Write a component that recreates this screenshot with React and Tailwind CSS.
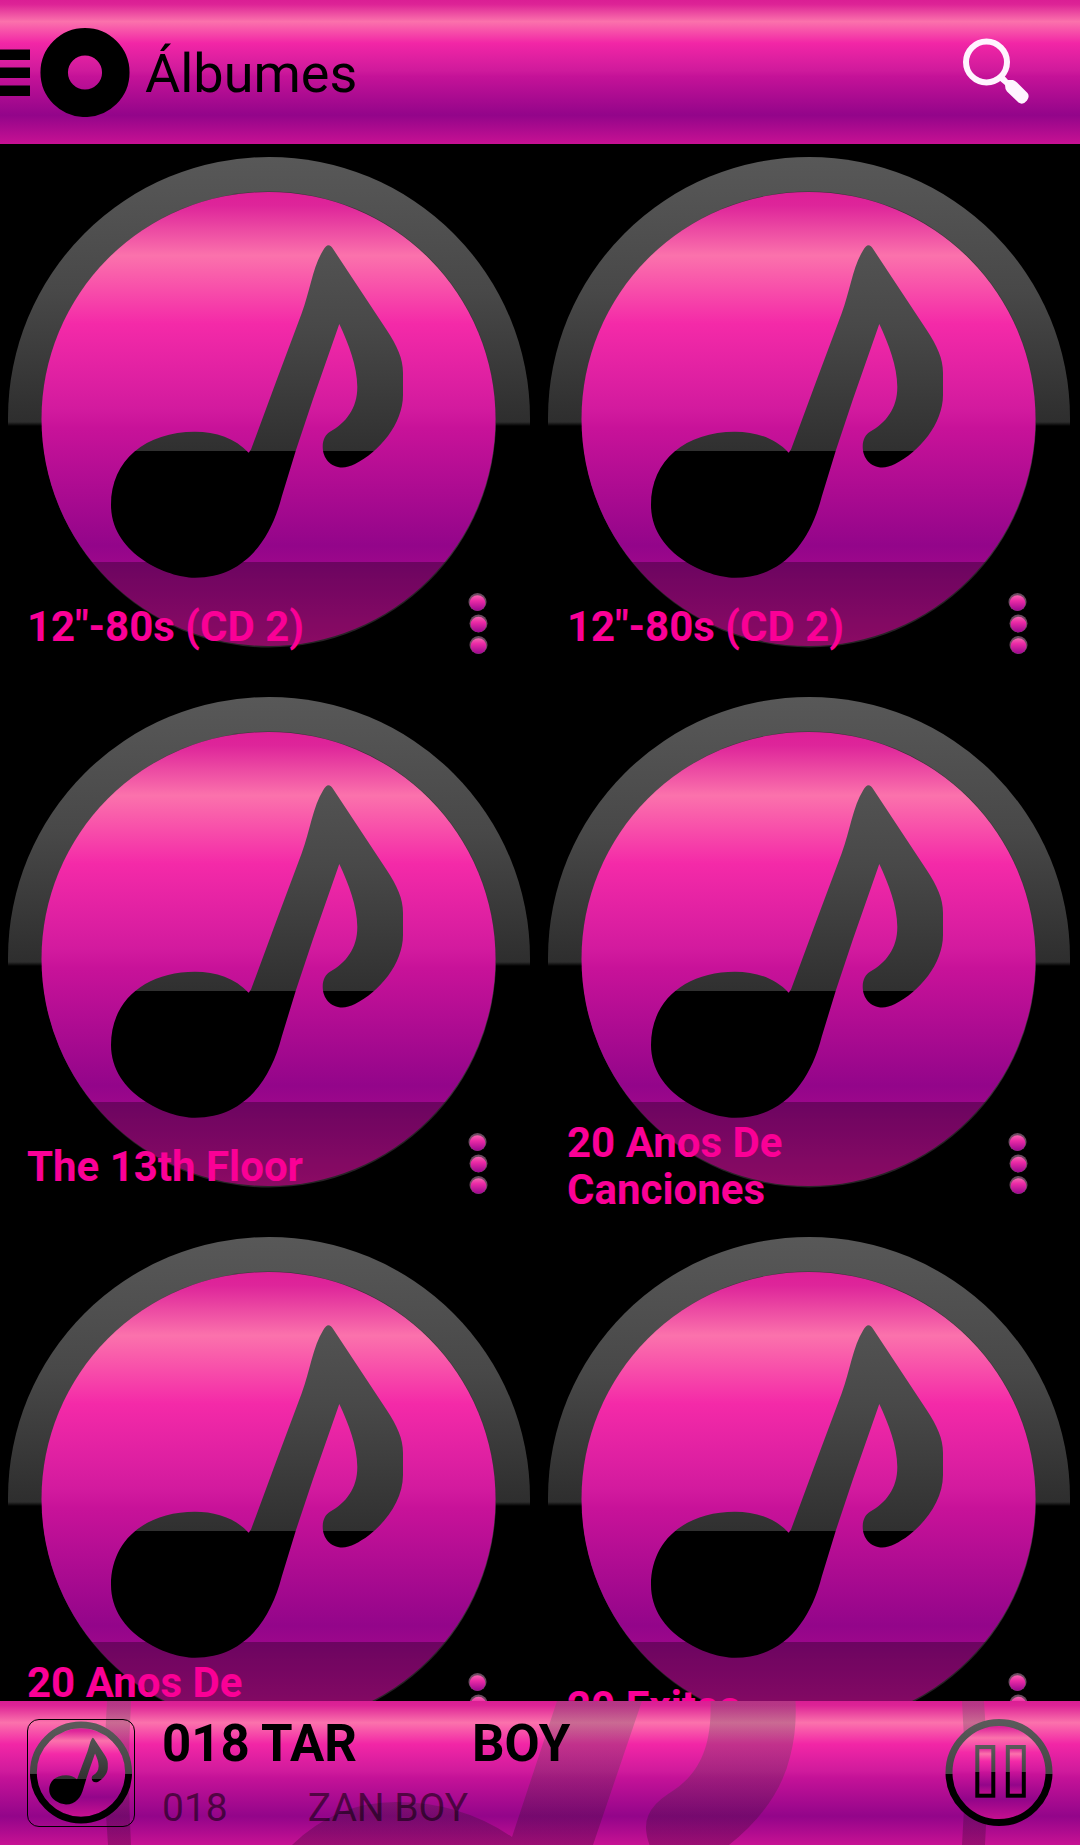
const albums = [
  { id: 1, title: '12"-80s (CD 2)' },
  { id: 2, title: '12"-80s (CD 2)' },
  { id: 3, title: "The 13th Floor" },
  { id: 4, title: "20 Anos De Canciones" },
  { id: 5, title: "20 Anos De Canciones" },
  { id: 6, title: "20 Exitos" },
];

const barStyle =
  "bg-[linear-gradient(to_bottom,#da1e94_0%,#dd2396_3%,#fb72ac_15%,#f226a6_30%,#cf1a9c_49%,#c51298_53%,#93058a_80%,#c71193_100%)]";

const NOTE =
  "M323.3 106 Q328.3 97 333.3 105.3 L386.7 186 C397 202 403 214 403 229 V251 C403 280 379 308 355 320 C337 329.5 322.7 318 322.7 302.7 C322.7 295 326 290 330 287.7 C346 279 357.5 264 357.3 242.7 C357 222 349 201 339.3 180 L312.7 256 L296 306 L281.7 352.7 C270 398 243 433.7 195 433.7 C168 434 111 410 111 361 C111 316 146 287.7 195 287.7 C216 287.7 235 294 248.7 308.7 L251 305.5 L276.7 236 L301.7 169.3 C310 147 313 122 323.3 106 Z";

// gradients used by every drawing on the page
const Gradients = () => (
  <svg className="absolute h-0 w-0" aria-hidden="true">
    <defs>
      <linearGradient id="pink" x1="0" y1="0" x2="0" y2="1">
        <stop offset="0" stopColor="#dd1f97" />
        <stop offset=".03" stopColor="#de259a" />
        <stop offset=".14" stopColor="#fb72ac" />
        <stop offset=".29" stopColor="#f42aa8" />
        <stop offset=".48" stopColor="#d21a9e" />
        <stop offset=".52" stopColor="#c81299" />
        <stop offset=".78" stopColor="#93058a" />
        <stop offset="1" stopColor="#c81090" />
      </linearGradient>
      <linearGradient id="rim" gradientUnits="userSpaceOnUse" x1="0" y1="13" x2="0" y2="282">
        <stop offset="0" stopColor="#585858" />
        <stop offset=".5" stopColor="#484848" />
        <stop offset=".985" stopColor="#2e2e2e" />
        <stop offset="1" stopColor="#000" />
      </linearGradient>
      <linearGradient id="note" gradientUnits="userSpaceOnUse" x1="0" y1="60" x2="0" y2="307">
        <stop offset="0" stopColor="#585858" />
        <stop offset=".5" stopColor="#484848" />
        <stop offset=".998" stopColor="#303030" />
        <stop offset="1" stopColor="#000" />
      </linearGradient>
      <linearGradient id="ring" x1="0" y1="0" x2="0" y2="1">
        <stop offset="0" stopColor="#5a5a5a" />
        <stop offset=".51" stopColor="#444" />
        <stop offset=".52" stopColor="#000" />
        <stop offset="1" stopColor="#000" />
      </linearGradient>
      <linearGradient id="dot" x1="0" y1="0" x2="0" y2="1">
        <stop offset="0" stopColor="#f567b0" />
        <stop offset=".35" stopColor="#ec2ba6" />
        <stop offset="1" stopColor="#9a088e" />
      </linearGradient>
      <linearGradient id="shade" gradientUnits="userSpaceOnUse" x1="0" y1="0" x2="0" y2="144">
        <stop offset="0" stopColor="#666" stopOpacity=".32" />
        <stop offset=".4" stopColor="#444" stopOpacity=".28" />
        <stop offset="1" stopColor="#000" stopOpacity=".22" />
      </linearGradient>
    </defs>
  </svg>
);

const Cover = () => (
  <svg viewBox="0 0 540 540" className="block w-full" aria-hidden="true">
    <path d="M8 282 V274 A261 261 0 0 1 530 274 V282 Z" fill="url(#rim)" />
    <ellipse cx="269" cy="275.5" rx="227" ry="228" fill="#3a3338" />
    <ellipse cx="268.5" cy="275" rx="227" ry="227" fill="url(#pink)" />
    <path d={NOTE} fill="url(#note)" />
  </svg>
);

const AlbumCard = ({ title }) => (
  <article className="relative">
    <Cover />
    <div className="absolute inset-x-0 bottom-0 flex h-[122px] items-center justify-between bg-black/30 pt-[6px] pr-[52px] pl-[27px]">
      <h2 className="max-w-[300px] text-[42px] leading-[47px] font-bold text-[#fa0096]">{title}</h2>
      <button type="button" aria-label="Opciones" className="shrink-0">
        <svg width="20" height="66" viewBox="0 0 20 66">
          <g fill="#6b4a60">
            <circle cx="9.5" cy="9" r="9" />
            <circle cx="10.5" cy="30.5" r="9" />
            <circle cx="10.5" cy="52" r="9" />
          </g>
          <g fill="url(#dot)">
            <circle cx="9.5" cy="10" r="7.8" />
            <circle cx="10.5" cy="31.5" r="7.8" />
            <circle cx="10.5" cy="53" r="7.8" />
          </g>
        </svg>
      </button>
    </div>
  </article>
);

const Header = () => (
  <header className={`flex h-36 shrink-0 items-center justify-between pr-[51px] ${barStyle}`}>
    <div className="flex items-center gap-[15px]">
      <button type="button" aria-label="Menú">
        <svg width="130" height="90" viewBox="0 0 130 90">
          <path d="M0 22.5H30V33H0ZM0 40.5H30V51H0ZM0 58.5H30V69H0Z" />
          <circle cx="85" cy="45.5" r="30.8" fill="none" stroke="#000" strokeWidth="27.5" />
        </svg>
      </button>
      <h1 className="pt-1 text-[54px] leading-[64px] text-black">Álbumes</h1>
    </div>
    <button type="button" aria-label="Buscar">
      <svg width="68" height="68" viewBox="0 0 68 68">
        <circle cx="25.5" cy="24" r="20.5" fill="none" stroke="#fff5ff" strokeWidth="6" />
        <path d="M38 42 L42.5 37 L47 42 L52 42 Q54 42.5 56 44.5 L66.5 55 Q69 58.5 66 62.5 Q62 67.5 57.5 64.5 L46 53.5 Q44 51.5 44 47 Z" fill="#fff5ff" />
      </svg>
    </button>
  </header>
);

const Watermark = () => (
  <svg
    viewBox="0 0 1080 144"
    preserveAspectRatio="none"
    className="absolute inset-0 h-full w-full"
    aria-hidden="true"
  >
    <g fill="url(#shade)">
      <path d="M107 0 H131 Q127 72 131 144 H108 Q102 72 107 0Z" />
      <path d="M962 0 H984 Q990 72 985 144 H962 Q967 72 962 0Z" />
      <path d="M557 0 H642 L593 144 H292 Q336 101 396 101 Q461 101 512 136 Z" />
      <path d="M710.5 0 H795.5 Q797 30 790 56 Q778 105 729 144 H649.5 Q643 126 648.5 114 Q653 103 668 93 C700 74 712 45 710.5 0Z" />
    </g>
  </svg>
);

const Player = () => (
  <footer className={`relative h-36 shrink-0 ${barStyle}`}>
    <Watermark />
    <div className="relative flex h-full items-center px-[27px]">
      <svg width="108" height="108" viewBox="0 0 108 108" className="shrink-0 rounded-xl border border-black" aria-hidden="true">
        <circle cx="54" cy="53.5" r="45" fill="url(#pink)" />
        <circle cx="54" cy="53.5" r="48.5" fill="none" stroke="url(#ring)" strokeWidth="7" />
        <path d={NOTE} fill="url(#note)" transform="translate(-1.1 -2.65) scale(.2045)" />
      </svg>
      <div className="min-w-0 flex-1 pt-[2px] pl-[27px]">
        <p className="flex gap-[115px] text-[51px] leading-[60px] font-bold text-black">
          <span>018 TAR</span>
          <span>BOY</span>
        </p>
        <p className="flex gap-20 pt-2 text-[39px] leading-[52px] text-black/55">
          <span>018</span>
          <span>ZAN BOY</span>
        </p>
      </div>
      <button type="button" aria-label="Pausa" className="shrink-0">
        <svg width="108" height="108" viewBox="0 0 108 108">
          <circle cx="54" cy="53.5" r="48" fill="url(#pink)" />
          <circle cx="54" cy="53.5" r="50" fill="none" stroke="url(#ring)" strokeWidth="7" />
          <g fill="url(#pink)" stroke="url(#ring)" strokeWidth="4">
            <rect x="32.3" y="28" width="16" height="48.7" />
            <rect x="62.8" y="28" width="16" height="48.7" />
          </g>
        </svg>
      </button>
    </div>
  </footer>
);

export default function App() {
  return (
    <div className="flex h-screen flex-col bg-black font-['Roboto',sans-serif]">
      <Gradients />
      <Header />
      <main className="min-h-0 flex-1 overflow-hidden">
        <div className="grid grid-cols-2">
          {albums.map((album) => (
            <AlbumCard key={album.id} title={album.title} />
          ))}
        </div>
      </main>
      <Player />
    </div>
  );
}
